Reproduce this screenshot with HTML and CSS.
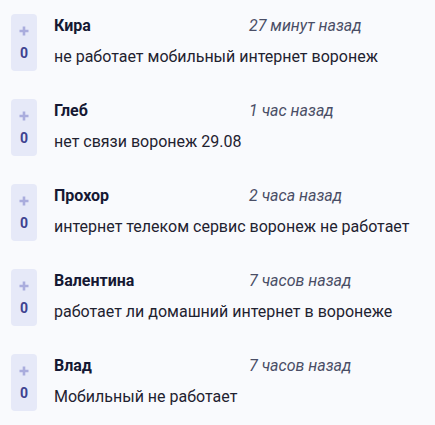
FILE: index.html
```html
<!DOCTYPE html>
<html lang="ru">
<head>
    <meta charset="UTF-8">
    <meta name="viewport" content="width=device-width, initial-scale=1.0">
    <title>Комментарии</title>
    <link rel="stylesheet" href="styles.css">
</head>
<body>
    <div class="comments">
        <div class="comment">
            <div class="vote">
                <svg class="plus" viewBox="0 0 10 10"><path d="M5 0.5v9M0.5 5h9"/></svg>
                <span class="score">0</span>
            </div>
            <div class="body">
                <div class="head">
                    <span class="name">Кира</span>
                    <span class="time">27 минут назад</span>
                </div>
                <div class="text">не работает мобильный интернет воронеж</div>
            </div>
        </div>

        <div class="comment">
            <div class="vote">
                <svg class="plus" viewBox="0 0 10 10"><path d="M5 0.5v9M0.5 5h9"/></svg>
                <span class="score">0</span>
            </div>
            <div class="body">
                <div class="head">
                    <span class="name">Глеб</span>
                    <span class="time">1 час назад</span>
                </div>
                <div class="text">нет связи воронеж 29.08</div>
            </div>
        </div>

        <div class="comment">
            <div class="vote">
                <svg class="plus" viewBox="0 0 10 10"><path d="M5 0.5v9M0.5 5h9"/></svg>
                <span class="score">0</span>
            </div>
            <div class="body">
                <div class="head">
                    <span class="name">Прохор</span>
                    <span class="time">2 часа назад</span>
                </div>
                <div class="text">интернет телеком сервис воронеж не работает</div>
            </div>
        </div>

        <div class="comment">
            <div class="vote">
                <svg class="plus" viewBox="0 0 10 10"><path d="M5 0.5v9M0.5 5h9"/></svg>
                <span class="score">0</span>
            </div>
            <div class="body">
                <div class="head">
                    <span class="name">Валентина</span>
                    <span class="time">7 часов назад</span>
                </div>
                <div class="text">работает ли домашний интернет в воронеже</div>
            </div>
        </div>

        <div class="comment">
            <div class="vote">
                <svg class="plus" viewBox="0 0 10 10"><path d="M5 0.5v9M0.5 5h9"/></svg>
                <span class="score">0</span>
            </div>
            <div class="body">
                <div class="head">
                    <span class="name">Влад</span>
                    <span class="time">7 часов назад</span>
                </div>
                <div class="text">Мобильный не работает</div>
            </div>
        </div>
    </div>
</body>
</html>
```

FILE: styles.css
```css
body {
    font-family: 'Roboto', 'Liberation Sans', sans-serif;
    background-color: #f9fafd;
    margin: 0;
    color: #1f2230;
}

.comments {
    padding: 14px 0 0 11px;
}

.comment {
    display: flex;
    height: 85px;
}

.vote {
    flex: none;
    width: 26px;
    height: 57px;
    background-color: #e6e9f8;
    border-radius: 4px;
    display: flex;
    flex-direction: column;
    align-items: center;
    gap: 9px;
    padding-top: 12px;
    box-sizing: border-box;
}

.plus {
    width: 10px;
    height: 10px;
    stroke: #aaaddd;
    stroke-width: 2.6;
    fill: none;
}

.score {
    font-size: 14px;
    font-weight: bold;
    line-height: 17px;
    color: #3d4290;
}

.body {
    margin-left: 17px;
}

.head {
    display: flex;
    margin-top: 1px;
    height: 20px;
    align-items: center;
}

.name {
    width: 195px;
    font-size: 16px;
    font-weight: bold;
    color: #151833;
}

.time {
    font-size: 16px;
    font-style: italic;
    color: #4a4e66;
}

.text {
    margin-top: 12px;
    font-size: 16px;
    line-height: 20px;
    color: #1f2230;
}
```
